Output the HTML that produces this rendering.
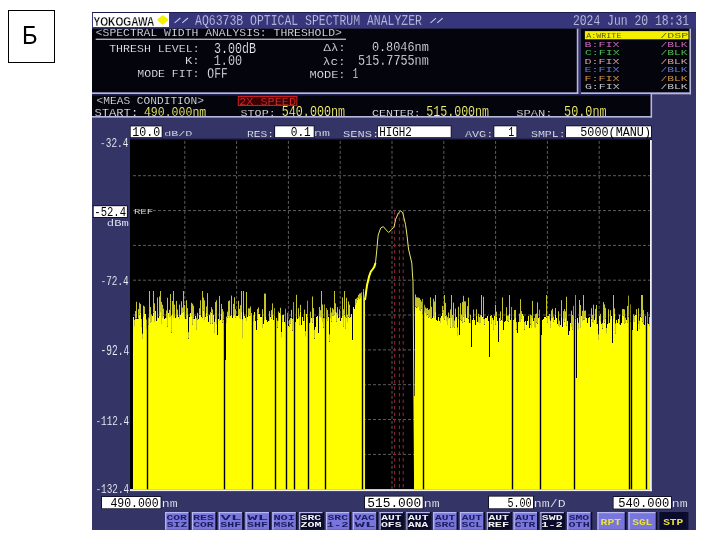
<!DOCTYPE html>
<html><head><meta charset="utf-8"><style>
html,body{margin:0;padding:0;background:#fff;width:702px;height:536px;overflow:hidden}
svg{display:block;will-change:transform;filter:blur(0.3px)}
</style></head><body>
<svg width="702" height="536" viewBox="0 0 702 536">
<rect x="0" y="0" width="702" height="536" fill="#ffffff" />
<rect x="8.5" y="10.5" width="46" height="52" fill="none" stroke="#000" stroke-width="1"/>
<text transform="translate(22.10,44.30) scale(0.2377,0.2623)" font-family="Liberation Sans" font-weight="normal" font-size="100" fill="#000"  xml:space="preserve">Б</text>
<rect x="92" y="12" width="604" height="518" fill="#353466" />
<rect x="92" y="12" width="604" height="16" fill="#37367c" />
<rect x="92" y="12" width="604" height="1" fill="#1c1c50" />
<rect x="93" y="13" width="76" height="14" fill="#ffffff" />
<text transform="translate(93.40,25.70) scale(0.1015,0.1348)" font-family="Liberation Sans" font-weight="bold" font-size="100" fill="#000"  stroke="#ffffff" stroke-width="2" xml:space="preserve">YOKOGAWA</text>
<path d="M158.6,19.9L162.8,16.4L167,19.9L162.8,23.4Z" fill="#f4f000" stroke="#f4f000" stroke-width="2.2" stroke-linejoin="round"/>
<path d="M174.6,22.8L180.4,18M182.2,22.8L188,18M430.5,22.8L436,18.1M437.2,22.8L442.7,18.1" stroke="#c8c8e8" stroke-width="1.1"/>
<text transform="translate(195.00,25.20) scale(0.1147,0.1373)" font-family="Liberation Mono" font-weight="normal" font-size="100" fill="#d8d8f4"  stroke="#37367c" stroke-width="2.2" xml:space="preserve">AQ6373B OPTICAL SPECTRUM ANALYZER</text>
<text transform="translate(572.90,24.80) scale(0.1139,0.1373)" font-family="Liberation Mono" font-weight="normal" font-size="100" fill="#e0e0f6"  stroke="#37367c" stroke-width="2.2" xml:space="preserve">2024 Jun 20 18:31</text>
<rect x="92" y="28.7" width="484.8" height="63.7" fill="#04040c" />
<rect x="92" y="92.4" width="486.3" height="1.9" fill="#b8b8de" />
<rect x="576.8" y="28.7" width="1.5" height="65.6" fill="#b8b8de" />
<rect x="581" y="28.7" width="108.5" height="63.7" fill="#04040c" />
<rect x="581" y="92.4" width="110" height="1.9" fill="#b8b8de" />
<rect x="689.5" y="28.7" width="1.5" height="65.6" fill="#b8b8de" />
<rect x="584.9" y="31.1" width="103.6" height="8.2" fill="#f4f000" />
<text transform="translate(586.20,38.30) scale(0.0839,0.0806)" font-family="Liberation Mono" font-weight="normal" font-size="100" fill="#3c3c10"  stroke="#f4f000" stroke-width="1.2" xml:space="preserve">A:WRITE</text>
<text transform="translate(660.30,38.30) scale(0.1162,0.0806)" font-family="Liberation Mono" font-weight="normal" font-size="100" fill="#3c3c10"  stroke="#f4f000" stroke-width="1.2" xml:space="preserve">/DSP</text>
<text transform="translate(584.56,46.70) scale(0.1169,0.0776)" font-family="Liberation Mono" font-weight="normal" font-size="100" fill="#e070c8"  stroke="#04040c" stroke-width="0.8" xml:space="preserve">B:FIX</text>
<text transform="translate(660.42,46.70) scale(0.1132,0.0776)" font-family="Liberation Mono" font-weight="normal" font-size="100" fill="#e070c8"  stroke="#04040c" stroke-width="0.8" xml:space="preserve">/BLK</text>
<text transform="translate(584.92,55.20) scale(0.1157,0.0776)" font-family="Liberation Mono" font-weight="normal" font-size="100" fill="#50d050"  stroke="#04040c" stroke-width="0.8" xml:space="preserve">C:FIX</text>
<text transform="translate(660.42,55.20) scale(0.1132,0.0776)" font-family="Liberation Mono" font-weight="normal" font-size="100" fill="#50d050"  stroke="#04040c" stroke-width="0.8" xml:space="preserve">/BLK</text>
<text transform="translate(584.56,63.70) scale(0.1169,0.0776)" font-family="Liberation Mono" font-weight="normal" font-size="100" fill="#e8b0a8"  stroke="#04040c" stroke-width="0.8" xml:space="preserve">D:FIX</text>
<text transform="translate(660.42,63.70) scale(0.1132,0.0776)" font-family="Liberation Mono" font-weight="normal" font-size="100" fill="#e8b0a8"  stroke="#04040c" stroke-width="0.8" xml:space="preserve">/BLK</text>
<text transform="translate(584.56,72.20) scale(0.1169,0.0776)" font-family="Liberation Mono" font-weight="normal" font-size="100" fill="#7080e0"  stroke="#04040c" stroke-width="0.8" xml:space="preserve">E:FIX</text>
<text transform="translate(660.42,72.20) scale(0.1132,0.0776)" font-family="Liberation Mono" font-weight="normal" font-size="100" fill="#7080e0"  stroke="#04040c" stroke-width="0.8" xml:space="preserve">/BLK</text>
<text transform="translate(584.44,80.70) scale(0.1173,0.0776)" font-family="Liberation Mono" font-weight="normal" font-size="100" fill="#e09c50"  stroke="#04040c" stroke-width="0.8" xml:space="preserve">F:FIX</text>
<text transform="translate(660.42,80.70) scale(0.1132,0.0776)" font-family="Liberation Mono" font-weight="normal" font-size="100" fill="#e09c50"  stroke="#04040c" stroke-width="0.8" xml:space="preserve">/BLK</text>
<text transform="translate(584.92,89.20) scale(0.1157,0.0776)" font-family="Liberation Mono" font-weight="normal" font-size="100" fill="#d8d8d8"  stroke="#04040c" stroke-width="0.8" xml:space="preserve">G:FIX</text>
<text transform="translate(660.42,89.20) scale(0.1132,0.0776)" font-family="Liberation Mono" font-weight="normal" font-size="100" fill="#d8d8d8"  stroke="#04040c" stroke-width="0.8" xml:space="preserve">/BLK</text>
<text transform="translate(95.72,36.40) scale(0.1141,0.1060)" font-family="Liberation Mono" font-weight="normal" font-size="100" fill="#f4f4fa"  stroke="#04040c" stroke-width="1.8" xml:space="preserve">&lt;SPECTRAL WIDTH ANALYSIS: THRESHOLD&gt;</text>
<rect x="95.7" y="38.6" width="250.3" height="1.4" fill="#b0b0b0" />
<text transform="translate(109.14,51.70) scale(0.1160,0.1060)" font-family="Liberation Mono" font-weight="normal" font-size="100" fill="#f4f4fa"  stroke="#04040c" stroke-width="1.8" xml:space="preserve">THRESH LEVEL:</text>
<text transform="translate(213.90,52.80) scale(0.1171,0.1389)" font-family="Liberation Mono" font-weight="normal" font-size="100" fill="#f4f4fa"  stroke="#04040c" stroke-width="1.8" xml:space="preserve">3.00dB</text>
<text transform="translate(185.02,64.00) scale(0.1227,0.1045)" font-family="Liberation Mono" font-weight="normal" font-size="100" fill="#f4f4fa"  stroke="#04040c" stroke-width="1.8" xml:space="preserve">K:</text>
<text transform="translate(213.77,64.90) scale(0.1181,0.1433)" font-family="Liberation Mono" font-weight="normal" font-size="100" fill="#f4f4fa"  stroke="#04040c" stroke-width="1.8" xml:space="preserve">1.00</text>
<text transform="translate(137.31,76.60) scale(0.1153,0.1060)" font-family="Liberation Mono" font-weight="normal" font-size="100" fill="#f4f4fa"  stroke="#04040c" stroke-width="1.8" xml:space="preserve">MODE FIT:</text>
<text transform="translate(207.33,77.70) scale(0.1137,0.1493)" font-family="Liberation Mono" font-weight="normal" font-size="100" fill="#f4f4fa"  stroke="#04040c" stroke-width="1.8" xml:space="preserve">OFF</text>
<text transform="translate(323.50,50.80) scale(0.1231,0.1090)" font-family="Liberation Mono" font-weight="normal" font-size="100" fill="#f4f4fa"  stroke="#04040c" stroke-width="1.8" xml:space="preserve">Δλ:</text>
<text transform="translate(371.89,51.40) scale(0.1186,0.1343)" font-family="Liberation Mono" font-weight="normal" font-size="100" fill="#f4f4fa"  stroke="#04040c" stroke-width="1.8" xml:space="preserve">0.8046nm</text>
<text transform="translate(322.73,64.80) scale(0.1280,0.1090)" font-family="Liberation Mono" font-weight="normal" font-size="100" fill="#f4f4fa"  stroke="#04040c" stroke-width="1.8" xml:space="preserve">λc:</text>
<text transform="translate(358.09,65.30) scale(0.1178,0.1448)" font-family="Liberation Mono" font-weight="normal" font-size="100" fill="#f4f4fa"  stroke="#04040c" stroke-width="1.8" xml:space="preserve">515.7755nm</text>
<text transform="translate(309.58,77.50) scale(0.1200,0.1075)" font-family="Liberation Mono" font-weight="normal" font-size="100" fill="#f4f4fa"  stroke="#04040c" stroke-width="1.8" xml:space="preserve">MODE:</text>
<text transform="translate(352.77,78.00) scale(0.0896,0.1418)" font-family="Liberation Mono" font-weight="normal" font-size="100" fill="#f4f4fa"  stroke="#04040c" stroke-width="1.8" xml:space="preserve">1</text>
<rect x="92" y="94" width="560" height="1.6" fill="#202050" />
<rect x="92" y="95.5" width="558.6" height="20.5" fill="#04040c" />
<rect x="650.6" y="94" width="1.5" height="23.6" fill="#b8b8de" />
<rect x="92" y="116" width="560" height="1.6" fill="#b8b8de" />
<text transform="translate(96.53,104.20) scale(0.1120,0.1030)" font-family="Liberation Mono" font-weight="normal" font-size="100" fill="#f4f4fa"  stroke="#04040c" stroke-width="1.8" xml:space="preserve">&lt;MEAS CONDITION&gt;</text>
<text transform="translate(94.51,115.80) scale(0.1214,0.1045)" font-family="Liberation Mono" font-weight="normal" font-size="100" fill="#f4f4fa"  stroke="#04040c" stroke-width="1.8" xml:space="preserve">START:</text>
<text transform="translate(143.92,115.80) scale(0.1155,0.1284)" font-family="Liberation Mono" font-weight="normal" font-size="100" fill="#f8f870"  stroke="#04040c" stroke-width="1" xml:space="preserve">490.000nm</text>
<rect x="238.3" y="96.4" width="58.6" height="9" fill="#3a0000" stroke="#d82020" stroke-width="1"/>
<text transform="translate(239.17,104.60) scale(0.1186,0.1045)" font-family="Liberation Mono" font-weight="normal" font-size="100" fill="#e83030"  stroke="#3a0000" stroke-width="1.8" xml:space="preserve">2X SPEED</text>
<text transform="translate(240.53,116.30) scale(0.1176,0.0940)" font-family="Liberation Mono" font-weight="normal" font-size="100" fill="#f4f4fa"  stroke="#04040c" stroke-width="1.8" xml:space="preserve">STOP:</text>
<text transform="translate(281.80,116.30) scale(0.1172,0.1403)" font-family="Liberation Mono" font-weight="normal" font-size="100" fill="#f8f870"  stroke="#04040c" stroke-width="1" xml:space="preserve">540.000nm</text>
<text transform="translate(372.02,116.30) scale(0.1161,0.0940)" font-family="Liberation Mono" font-weight="normal" font-size="100" fill="#f4f4fa"  stroke="#04040c" stroke-width="1.8" xml:space="preserve">CENTER:</text>
<text transform="translate(426.20,116.30) scale(0.1166,0.1388)" font-family="Liberation Mono" font-weight="normal" font-size="100" fill="#f8f870"  stroke="#04040c" stroke-width="1" xml:space="preserve">515.000nm</text>
<text transform="translate(516.32,116.30) scale(0.1210,0.0940)" font-family="Liberation Mono" font-weight="normal" font-size="100" fill="#f4f4fa"  stroke="#04040c" stroke-width="1.8" xml:space="preserve">SPAN:</text>
<text transform="translate(564.09,116.30) scale(0.1181,0.1388)" font-family="Liberation Mono" font-weight="normal" font-size="100" fill="#f8f870"  stroke="#04040c" stroke-width="1" xml:space="preserve">50.0nm</text>
<rect x="129.89999999999998" y="125.60000000000001" width="32.6" height="12.399999999999983" fill="#0c0c20" />
<rect x="130.7" y="126.4" width="31.0" height="10.799999999999983" fill="#ffffff" />
<text transform="translate(132.18,136.10) scale(0.1167,0.1269)" font-family="Liberation Mono" font-weight="normal" font-size="100" fill="#000"  xml:space="preserve">10.0</text>
<text transform="translate(164.18,136.20) scale(0.1175,0.0746)" font-family="Liberation Mono" font-weight="normal" font-size="100" fill="#f4f4fa"  stroke="#353466" stroke-width="1.8" xml:space="preserve">dB/D</text>
<text transform="translate(246.90,136.50) scale(0.1130,0.0866)" font-family="Liberation Mono" font-weight="normal" font-size="100" fill="#f4f4fa"  stroke="#353466" stroke-width="1.8" xml:space="preserve">RES:</text>
<rect x="274.3" y="125.5" width="40.19999999999997" height="12.499999999999991" fill="#0c0c20" />
<rect x="275.1" y="126.3" width="38.599999999999966" height="10.899999999999991" fill="#ffffff" />
<text transform="translate(290.73,136.10) scale(0.1112,0.1269)" font-family="Liberation Mono" font-weight="normal" font-size="100" fill="#000"  xml:space="preserve">0.1</text>
<text transform="translate(314.00,136.30) scale(0.1330,0.0907)" font-family="Liberation Mono" font-weight="normal" font-size="100" fill="#f4f4fa"  stroke="#353466" stroke-width="1.8" xml:space="preserve">nm</text>
<text transform="translate(342.91,136.50) scale(0.1213,0.0866)" font-family="Liberation Mono" font-weight="normal" font-size="100" fill="#f4f4fa"  stroke="#353466" stroke-width="1.8" xml:space="preserve">SENS:</text>
<rect x="377.09999999999997" y="125.5" width="74.4" height="12.499999999999991" fill="#0c0c20" />
<rect x="377.9" y="126.3" width="72.80000000000001" height="10.899999999999991" fill="#ffffff" />
<text transform="translate(379.13,136.10) scale(0.1088,0.1269)" font-family="Liberation Mono" font-weight="normal" font-size="100" fill="#000"  xml:space="preserve">HIGH2</text>
<text transform="translate(465.00,136.50) scale(0.1176,0.0866)" font-family="Liberation Mono" font-weight="normal" font-size="100" fill="#f4f4fa"  stroke="#353466" stroke-width="1.8" xml:space="preserve">AVG:</text>
<rect x="493.5" y="125.5" width="23.699999999999967" height="12.499999999999991" fill="#0c0c20" />
<rect x="494.3" y="126.3" width="22.099999999999966" height="10.899999999999991" fill="#ffffff" />
<text transform="translate(508.30,136.10) scale(0.1000,0.1269)" font-family="Liberation Mono" font-weight="normal" font-size="100" fill="#000"  xml:space="preserve">1</text>
<text transform="translate(530.94,136.50) scale(0.1162,0.0866)" font-family="Liberation Mono" font-weight="normal" font-size="100" fill="#f4f4fa"  stroke="#353466" stroke-width="1.8" xml:space="preserve">SMPL:</text>
<rect x="565.2" y="125.5" width="86.6" height="12.499999999999991" fill="#0c0c20" />
<rect x="566" y="126.3" width="85" height="10.899999999999991" fill="#ffffff" />
<text transform="translate(580.29,136.10) scale(0.1179,0.1269)" font-family="Liberation Mono" font-weight="normal" font-size="100" fill="#000"  xml:space="preserve">5000(MANU)</text>
<text transform="translate(100.09,147.10) scale(0.0943,0.1194)" font-family="Liberation Mono" font-weight="normal" font-size="100" fill="#f0f0f8"  stroke="#353466" stroke-width="0.8" xml:space="preserve">-32.4</text>
<rect x="92.9" y="205.39999999999998" width="34.800000000000004" height="12.400000000000011" fill="#0c0c20" />
<rect x="93.7" y="206.2" width="33.2" height="10.800000000000011" fill="#ffffff" />
<text transform="translate(94.31,215.80) scale(0.1057,0.1194)" font-family="Liberation Mono" font-weight="normal" font-size="100" fill="#000"  xml:space="preserve">-52.4</text>
<text transform="translate(106.85,225.80) scale(0.1220,0.0917)" font-family="Liberation Mono" font-weight="normal" font-size="100" fill="#f0f0f8"  stroke="#353466" stroke-width="0.8" xml:space="preserve">dBm</text>
<text transform="translate(100.50,284.50) scale(0.0939,0.1269)" font-family="Liberation Mono" font-weight="normal" font-size="100" fill="#f0f0f8"  stroke="#353466" stroke-width="0.8" xml:space="preserve">-72.4</text>
<text transform="translate(100.47,355.40) scale(0.0957,0.1418)" font-family="Liberation Mono" font-weight="normal" font-size="100" fill="#f0f0f8"  stroke="#353466" stroke-width="0.8" xml:space="preserve">-92.4</text>
<text transform="translate(95.50,425.20) scale(0.0935,0.1328)" font-family="Liberation Mono" font-weight="normal" font-size="100" fill="#f0f0f8"  stroke="#353466" stroke-width="0.8" xml:space="preserve">-112.4</text>
<text transform="translate(95.50,492.50) scale(0.0935,0.1269)" font-family="Liberation Mono" font-weight="normal" font-size="100" fill="#f0f0f8"  stroke="#353466" stroke-width="0.8" xml:space="preserve">-132.4</text>
<rect x="101.2" y="496.2" width="60.199999999999996" height="12.900000000000011" fill="#0c0c20" />
<rect x="102" y="497" width="58.599999999999994" height="11.300000000000011" fill="#ffffff" />
<text transform="translate(110.43,507.00) scale(0.1149,0.1254)" font-family="Liberation Mono" font-weight="normal" font-size="100" fill="#000"  xml:space="preserve">490.000</text>
<text transform="translate(161.81,507.00) scale(0.1321,0.1111)" font-family="Liberation Mono" font-weight="normal" font-size="100" fill="#f4f4fa"  stroke="#353466" stroke-width="1.8" xml:space="preserve">nm</text>
<rect x="364.2" y="495.8" width="59.29999999999999" height="13.299999999999988" fill="#0c0c20" />
<rect x="365" y="496.6" width="57.69999999999999" height="11.699999999999989" fill="#ffffff" />
<text transform="translate(367.23,507.00) scale(0.1287,0.1284)" font-family="Liberation Mono" font-weight="normal" font-size="100" fill="#000"  xml:space="preserve">515.000</text>
<text transform="translate(423.81,507.00) scale(0.1321,0.1111)" font-family="Liberation Mono" font-weight="normal" font-size="100" fill="#f4f4fa"  stroke="#353466" stroke-width="1.8" xml:space="preserve">nm</text>
<rect x="488.2" y="495.8" width="45.6" height="13.299999999999988" fill="#0c0c20" />
<rect x="489" y="496.6" width="44" height="11.699999999999989" fill="#ffffff" />
<text transform="translate(507.39,507.00) scale(0.1009,0.1284)" font-family="Liberation Mono" font-weight="normal" font-size="100" fill="#000"  xml:space="preserve">5.00</text>
<text transform="translate(533.81,507.00) scale(0.1327,0.1111)" font-family="Liberation Mono" font-weight="normal" font-size="100" fill="#f4f4fa"  stroke="#353466" stroke-width="1.8" xml:space="preserve">nm/D</text>
<rect x="612.8000000000001" y="496.2" width="58.99999999999998" height="13.200000000000022" fill="#0c0c20" />
<rect x="613.6" y="497" width="57.39999999999998" height="11.600000000000023" fill="#ffffff" />
<text transform="translate(618.27,507.00) scale(0.1213,0.1254)" font-family="Liberation Mono" font-weight="normal" font-size="100" fill="#000"  xml:space="preserve">540.000</text>
<text transform="translate(671.81,507.00) scale(0.1321,0.1111)" font-family="Liberation Mono" font-weight="normal" font-size="100" fill="#f4f4fa"  stroke="#353466" stroke-width="1.8" xml:space="preserve">nm</text>
<rect x="165.1" y="512" width="23.6" height="17.8" fill="#7876dc" />
<rect x="165.1" y="512" width="23.6" height="1.2" fill="#b8b8f0" />
<rect x="165.1" y="512" width="1.2" height="17.8" fill="#b8b8f0" />
<rect x="188.7" y="512" width="1.6" height="17.8" fill="#0c0c24" />
<text transform="translate(166.45,520.20) scale(0.1136,0.0716)" font-family="Liberation Mono" font-weight="bold" font-size="100" fill="#1c1c60"  xml:space="preserve">COR</text>
<text transform="translate(166.67,527.40) scale(0.1149,0.0776)" font-family="Liberation Mono" font-weight="bold" font-size="100" fill="#1c1c60"  xml:space="preserve">SIZ</text>
<rect x="191.9" y="512" width="23.6" height="17.8" fill="#7876dc" />
<rect x="191.9" y="512" width="23.6" height="1.2" fill="#b8b8f0" />
<rect x="191.9" y="512" width="1.2" height="17.8" fill="#b8b8f0" />
<rect x="215.5" y="512" width="1.6" height="17.8" fill="#0c0c24" />
<text transform="translate(192.88,520.20) scale(0.1176,0.0716)" font-family="Liberation Mono" font-weight="bold" font-size="100" fill="#1c1c60"  xml:space="preserve">RES</text>
<text transform="translate(193.25,527.40) scale(0.1136,0.0776)" font-family="Liberation Mono" font-weight="bold" font-size="100" fill="#1c1c60"  xml:space="preserve">COR</text>
<rect x="218.7" y="512" width="23.6" height="17.8" fill="#7876dc" />
<rect x="218.7" y="512" width="23.6" height="1.2" fill="#b8b8f0" />
<rect x="218.7" y="512" width="1.2" height="17.8" fill="#b8b8f0" />
<rect x="242.29999999999998" y="512" width="1.6" height="17.8" fill="#0c0c24" />
<text transform="translate(220.50,520.20) scale(0.1739,0.0716)" font-family="Liberation Mono" font-weight="bold" font-size="100" fill="#1c1c60"  xml:space="preserve">VL</text>
<text transform="translate(220.27,527.40) scale(0.1163,0.0776)" font-family="Liberation Mono" font-weight="bold" font-size="100" fill="#1c1c60"  xml:space="preserve">SHF</text>
<rect x="245.5" y="512" width="23.6" height="17.8" fill="#7876dc" />
<rect x="245.5" y="512" width="23.6" height="1.2" fill="#b8b8f0" />
<rect x="245.5" y="512" width="1.2" height="17.8" fill="#b8b8f0" />
<rect x="269.1" y="512" width="1.6" height="17.8" fill="#0c0c24" />
<text transform="translate(247.30,520.20) scale(0.1739,0.0716)" font-family="Liberation Mono" font-weight="bold" font-size="100" fill="#1c1c60"  xml:space="preserve">WL</text>
<text transform="translate(247.07,527.40) scale(0.1163,0.0776)" font-family="Liberation Mono" font-weight="bold" font-size="100" fill="#1c1c60"  xml:space="preserve">SHF</text>
<rect x="272.3" y="512" width="23.6" height="17.8" fill="#7876dc" />
<rect x="272.3" y="512" width="23.6" height="1.2" fill="#b8b8f0" />
<rect x="272.3" y="512" width="1.2" height="17.8" fill="#b8b8f0" />
<rect x="295.90000000000003" y="512" width="1.6" height="17.8" fill="#0c0c24" />
<text transform="translate(273.38,520.20) scale(0.1205,0.0716)" font-family="Liberation Mono" font-weight="bold" font-size="100" fill="#1c1c60"  xml:space="preserve">NOI</text>
<text transform="translate(273.53,527.40) scale(0.1143,0.0776)" font-family="Liberation Mono" font-weight="bold" font-size="100" fill="#1c1c60"  xml:space="preserve">MSK</text>
<rect x="299.1" y="512" width="23.6" height="17.8" fill="#0a0a2c" />
<rect x="299.1" y="512" width="23.6" height="1.2" fill="#b8b8f0" />
<rect x="299.1" y="512" width="1.2" height="17.8" fill="#b8b8f0" />
<rect x="322.70000000000005" y="512" width="1.6" height="17.8" fill="#0c0c24" />
<text transform="translate(300.67,520.20) scale(0.1143,0.0716)" font-family="Liberation Mono" font-weight="bold" font-size="100" fill="#f4f4f4"  xml:space="preserve">SRC</text>
<text transform="translate(300.43,527.40) scale(0.1170,0.0776)" font-family="Liberation Mono" font-weight="bold" font-size="100" fill="#f4f4f4"  xml:space="preserve">ZOM</text>
<rect x="325.9" y="512" width="23.6" height="17.8" fill="#7876dc" />
<rect x="325.9" y="512" width="23.6" height="1.2" fill="#b8b8f0" />
<rect x="325.9" y="512" width="1.2" height="17.8" fill="#b8b8f0" />
<rect x="349.5" y="512" width="1.6" height="17.8" fill="#0c0c24" />
<text transform="translate(327.47,520.20) scale(0.1143,0.0716)" font-family="Liberation Mono" font-weight="bold" font-size="100" fill="#1c1c60"  xml:space="preserve">SRC</text>
<text transform="translate(326.86,527.40) scale(0.1198,0.0776)" font-family="Liberation Mono" font-weight="bold" font-size="100" fill="#1c1c60"  xml:space="preserve">1-2</text>
<rect x="352.7" y="512" width="23.6" height="17.8" fill="#7876dc" />
<rect x="352.7" y="512" width="23.6" height="1.2" fill="#b8b8f0" />
<rect x="352.7" y="512" width="1.2" height="17.8" fill="#b8b8f0" />
<rect x="376.3" y="512" width="1.6" height="17.8" fill="#0c0c24" />
<text transform="translate(354.50,520.20) scale(0.1130,0.0716)" font-family="Liberation Mono" font-weight="bold" font-size="100" fill="#1c1c60"  xml:space="preserve">VAC</text>
<text transform="translate(354.50,527.40) scale(0.1739,0.0776)" font-family="Liberation Mono" font-weight="bold" font-size="100" fill="#1c1c60"  xml:space="preserve">WL</text>
<rect x="379.5" y="512" width="23.6" height="17.8" fill="#0a0a2c" />
<rect x="379.5" y="512" width="23.6" height="1.2" fill="#b8b8f0" />
<rect x="379.5" y="512" width="1.2" height="17.8" fill="#b8b8f0" />
<rect x="403.1" y="512" width="1.6" height="17.8" fill="#0c0c24" />
<text transform="translate(381.30,520.20) scale(0.1130,0.0716)" font-family="Liberation Mono" font-weight="bold" font-size="100" fill="#f4f4f4"  xml:space="preserve">AUT</text>
<text transform="translate(380.96,527.40) scale(0.1149,0.0776)" font-family="Liberation Mono" font-weight="bold" font-size="100" fill="#f4f4f4"  xml:space="preserve">OFS</text>
<rect x="406.3" y="512" width="23.6" height="17.8" fill="#0a0a2c" />
<rect x="406.3" y="512" width="23.6" height="1.2" fill="#b8b8f0" />
<rect x="406.3" y="512" width="1.2" height="17.8" fill="#b8b8f0" />
<rect x="429.90000000000003" y="512" width="1.6" height="17.8" fill="#0c0c24" />
<text transform="translate(408.10,520.20) scale(0.1130,0.0716)" font-family="Liberation Mono" font-weight="bold" font-size="100" fill="#f4f4f4"  xml:space="preserve">AUT</text>
<text transform="translate(408.10,527.40) scale(0.1111,0.0776)" font-family="Liberation Mono" font-weight="bold" font-size="100" fill="#f4f4f4"  xml:space="preserve">ANA</text>
<rect x="433.1" y="512" width="23.6" height="17.8" fill="#7876dc" />
<rect x="433.1" y="512" width="23.6" height="1.2" fill="#b8b8f0" />
<rect x="433.1" y="512" width="1.2" height="17.8" fill="#b8b8f0" />
<rect x="456.70000000000005" y="512" width="1.6" height="17.8" fill="#0c0c24" />
<text transform="translate(434.90,520.20) scale(0.1130,0.0716)" font-family="Liberation Mono" font-weight="bold" font-size="100" fill="#1c1c60"  xml:space="preserve">AUT</text>
<text transform="translate(434.67,527.40) scale(0.1143,0.0776)" font-family="Liberation Mono" font-weight="bold" font-size="100" fill="#1c1c60"  xml:space="preserve">SRC</text>
<rect x="459.9" y="512" width="23.6" height="17.8" fill="#7876dc" />
<rect x="459.9" y="512" width="23.6" height="1.2" fill="#b8b8f0" />
<rect x="459.9" y="512" width="1.2" height="17.8" fill="#b8b8f0" />
<rect x="483.5" y="512" width="1.6" height="17.8" fill="#0c0c24" />
<text transform="translate(461.70,520.20) scale(0.1130,0.0716)" font-family="Liberation Mono" font-weight="bold" font-size="100" fill="#1c1c60"  xml:space="preserve">AUT</text>
<text transform="translate(461.47,527.40) scale(0.1156,0.0776)" font-family="Liberation Mono" font-weight="bold" font-size="100" fill="#1c1c60"  xml:space="preserve">SCL</text>
<rect x="486.70000000000005" y="512" width="23.6" height="17.8" fill="#0a0a2c" />
<rect x="486.70000000000005" y="512" width="23.6" height="1.2" fill="#b8b8f0" />
<rect x="486.70000000000005" y="512" width="1.2" height="17.8" fill="#b8b8f0" />
<rect x="510.30000000000007" y="512" width="1.6" height="17.8" fill="#0c0c24" />
<text transform="translate(488.50,520.20) scale(0.1130,0.0716)" font-family="Liberation Mono" font-weight="bold" font-size="100" fill="#f4f4f4"  xml:space="preserve">AUT</text>
<text transform="translate(487.66,527.40) scale(0.1198,0.0776)" font-family="Liberation Mono" font-weight="bold" font-size="100" fill="#f4f4f4"  xml:space="preserve">REF</text>
<rect x="513.5" y="512" width="23.6" height="17.8" fill="#7876dc" />
<rect x="513.5" y="512" width="23.6" height="1.2" fill="#b8b8f0" />
<rect x="513.5" y="512" width="1.2" height="17.8" fill="#b8b8f0" />
<rect x="537.1" y="512" width="1.6" height="17.8" fill="#0c0c24" />
<text transform="translate(515.30,520.20) scale(0.1130,0.0716)" font-family="Liberation Mono" font-weight="bold" font-size="100" fill="#1c1c60"  xml:space="preserve">AUT</text>
<text transform="translate(514.85,527.40) scale(0.1136,0.0776)" font-family="Liberation Mono" font-weight="bold" font-size="100" fill="#1c1c60"  xml:space="preserve">CTR</text>
<rect x="540.3" y="512" width="23.6" height="17.8" fill="#0a0a2c" />
<rect x="540.3" y="512" width="23.6" height="1.2" fill="#b8b8f0" />
<rect x="540.3" y="512" width="1.2" height="17.8" fill="#b8b8f0" />
<rect x="563.9" y="512" width="1.6" height="17.8" fill="#0c0c24" />
<text transform="translate(541.87,520.20) scale(0.1149,0.0716)" font-family="Liberation Mono" font-weight="bold" font-size="100" fill="#f4f4f4"  xml:space="preserve">SWD</text>
<text transform="translate(541.26,527.40) scale(0.1198,0.0776)" font-family="Liberation Mono" font-weight="bold" font-size="100" fill="#f4f4f4"  xml:space="preserve">1-2</text>
<rect x="567.1" y="512" width="23.6" height="17.8" fill="#7876dc" />
<rect x="567.1" y="512" width="23.6" height="1.2" fill="#b8b8f0" />
<rect x="567.1" y="512" width="1.2" height="17.8" fill="#b8b8f0" />
<rect x="590.7" y="512" width="1.6" height="17.8" fill="#0c0c24" />
<text transform="translate(568.67,520.20) scale(0.1143,0.0716)" font-family="Liberation Mono" font-weight="bold" font-size="100" fill="#1c1c60"  xml:space="preserve">SMO</text>
<text transform="translate(568.55,527.40) scale(0.1176,0.0776)" font-family="Liberation Mono" font-weight="bold" font-size="100" fill="#1c1c60"  xml:space="preserve">OTH</text>
<rect x="597.4" y="512" width="27.4" height="17.8" fill="#7876dc" />
<rect x="597.4" y="512" width="27.4" height="1.2" fill="#b8b8f0" />
<rect x="597.4" y="512" width="1.2" height="17.8" fill="#b8b8f0" />
<rect x="624.8" y="512" width="1.6" height="17.8" fill="#0c0c24" />
<text transform="translate(600.60,524.50) scale(0.1141,0.0896)" font-family="Liberation Mono" font-weight="bold" font-size="100" fill="#e8e040"  xml:space="preserve">RPT</text>
<rect x="628.4" y="512" width="27.4" height="17.8" fill="#7876dc" />
<rect x="628.4" y="512" width="27.4" height="1.2" fill="#b8b8f0" />
<rect x="628.4" y="512" width="1.2" height="17.8" fill="#b8b8f0" />
<rect x="655.8" y="512" width="1.6" height="17.8" fill="#0c0c24" />
<text transform="translate(632.18,524.50) scale(0.1121,0.0896)" font-family="Liberation Mono" font-weight="bold" font-size="100" fill="#e8e040"  xml:space="preserve">SGL</text>
<rect x="659.4" y="512" width="27.4" height="17.8" fill="#0a0a2c" />
<rect x="686.8" y="512" width="1.6" height="17.8" fill="#0c0c24" />
<text transform="translate(663.18,524.50) scale(0.1115,0.0896)" font-family="Liberation Mono" font-weight="bold" font-size="100" fill="#e8e040"  xml:space="preserve">STP</text>
<rect x="130" y="140" width="520" height="349.2" fill="#000000" />
<rect x="650" y="140" width="1.8" height="351.2" fill="#f0f0f0" />
<rect x="130" y="489.2" width="521.8" height="1.9" fill="#f0f0f0" />
<rect x="130" y="138.6" width="522" height="1.4" fill="#10103a" />
<path d="M184.8,140.9V489.2M236.6,140.9V489.2M288.4,140.9V489.2M340.2,140.9V489.2M392.0,140.9V489.2M443.8,140.9V489.2M495.6,140.9V489.2M547.4,140.9V489.2M599.2,140.9V489.2M133,175.7H650M133,210.6H650M133,245.4H650M133,280.2H650M133,315.0H650M133,349.9H650M133,384.7H650M133,419.5H650M133,454.4H650" stroke="#5c5c5c" stroke-width="1" stroke-dasharray="3,2" fill="none"/>
<path d="M133,489.2L133,316.6L134,316.6L134,326.3L135,326.3L135,318.7L136,318.7L136,318.5L137,318.5L137,319.0L138,319.0L138,318.6L139,318.6L139,314.5L140,314.5L140,312.9L141,312.9L141,326.9L142,326.9L142,339.1L143,339.1L143,317.2L144,317.2L144,314.0L145,314.0L145,314.3L146,314.3L146,329.0L147,329.0L147,322.9L148,322.9L148,324.8L149,324.8L149,318.3L150,318.3L150,322.9L151,322.9L151,321.9L152,321.9L152,316.2L153,316.2L153,312.7L154,312.7L154,322.2L155,322.2L155,311.2L156,311.2L156,321.2L157,321.2L157,317.4L158,317.4L158,317.7L159,317.7L159,315.8L160,315.8L160,312.2L161,312.2L161,324.2L162,324.2L162,318.1L163,318.1L163,315.5L164,315.5L164,319.3L165,319.3L165,318.1L166,318.1L166,318.2L167,318.2L167,326.7L168,326.7L168,313.1L169,313.1L169,317.3L170,317.3L170,317.2L171,317.2L171,332.6L172,332.6L172,314.0L173,314.0L173,318.1L174,318.1L174,316.0L175,316.0L175,318.4L176,318.4L176,317.4L177,317.4L177,315.0L178,315.0L178,316.5L179,316.5L179,319.2L180,319.2L180,314.8L181,314.8L181,313.3L182,313.3L182,313.0L183,313.0L183,311.9L184,311.9L184,317.4L185,317.4L185,319.3L186,319.3L186,318.9L187,318.9L187,315.0L188,315.0L188,338.5L189,338.5L189,316.8L190,316.8L190,313.4L191,313.4L191,316.4L192,316.4L192,324.8L193,324.8L193,318.6L194,318.6L194,318.6L195,318.6L195,315.9L196,315.9L196,329.9L197,329.9L197,319.6L198,319.6L198,318.9L199,318.9L199,314.6L200,314.6L200,314.8L201,314.8L201,316.5L202,316.5L202,317.5L203,317.5L203,310.8L204,310.8L204,320.3L205,320.3L205,316.9L206,316.9L206,313.3L207,313.3L207,315.7L208,315.7L208,321.7L209,321.7L209,315.0L210,315.0L210,323.7L211,323.7L211,312.7L212,312.7L212,323.7L213,323.7L213,314.6L214,314.6L214,333.4L215,333.4L215,319.0L216,319.0L216,324.4L217,324.4L217,334.8L218,334.8L218,319.3L219,319.3L219,321.2L220,321.2L220,320.3L221,320.3L221,314.1L222,314.1L222,322.6L223,322.6L223,319.6L224,319.6L224,315.8L225,315.8L225,320.8L226,320.8L226,323.1L227,323.1L227,317.8L228,317.8L228,316.1L229,316.1L229,318.0L230,318.0L230,316.2L231,316.2L231,314.8L232,314.8L232,318.3L233,318.3L233,316.2L234,316.2L234,315.0L235,315.0L235,317.8L236,317.8L236,315.9L237,315.9L237,315.8L238,315.8L238,314.9L239,314.9L239,318.3L240,318.3L240,319.3L241,319.3L241,312.3L242,312.3L242,338.4L243,338.4L243,312.1L244,312.1L244,316.0L245,316.0L245,318.0L246,318.0L246,321.0L247,321.0L247,316.9L248,316.9L248,315.1L249,315.1L249,315.6L250,315.6L250,315.9L251,315.9L251,313.3L252,313.3L252,316.9L253,316.9L253,321.4L254,321.4L254,311.9L255,311.9L255,320.7L256,320.7L256,316.8L257,316.8L257,319.5L258,319.5L258,313.6L259,313.6L259,314.3L260,314.3L260,317.0L261,317.0L261,316.8L262,316.8L262,328.0L263,328.0L263,324.3L264,324.3L264,320.2L265,320.2L265,317.1L266,317.1L266,320.4L267,320.4L267,322.3L268,322.3L268,320.9L269,320.9L269,321.2L270,321.2L270,316.6L271,316.6L271,318.6L272,318.6L272,315.3L273,315.3L273,319.7L274,319.7L274,316.3L275,316.3L275,321.0L276,321.0L276,318.1L277,318.1L277,327.5L278,327.5L278,321.1L279,321.1L279,313.2L280,313.2L280,315.2L281,315.2L281,337.4L282,337.4L282,321.8L283,321.8L283,315.1L284,315.1L284,322.0L285,322.0L285,324.1L286,324.1L286,323.6L287,323.6L287,319.2L288,319.2L288,325.7L289,325.7L289,326.7L290,326.7L290,323.8L291,323.8L291,317.5L292,317.5L292,330.6L293,330.6L293,318.4L294,318.4L294,322.9L295,322.9L295,321.6L296,321.6L296,317.4L297,317.4L297,318.7L298,318.7L298,317.7L299,317.7L299,324.8L300,324.8L300,311.8L301,311.8L301,325.3L302,325.3L302,317.3L303,317.3L303,321.1L304,321.1L304,321.4L305,321.4L305,336.4L306,336.4L306,314.4L307,314.4L307,316.7L308,316.7L308,317.2L309,317.2L309,323.1L310,323.1L310,322.2L311,322.2L311,318.0L312,318.0L312,322.7L313,322.7L313,317.8L314,317.8L314,338.5L315,338.5L315,327.1L316,327.1L316,316.5L317,316.5L317,315.7L318,315.7L318,332.7L319,332.7L319,316.3L320,316.3L320,317.1L321,317.1L321,318.2L322,318.2L322,322.3L323,322.3L323,327.6L324,327.6L324,317.5L325,317.5L325,322.2L326,322.2L326,319.2L327,319.2L327,320.9L328,320.9L328,317.2L329,317.2L329,341.5L330,341.5L330,318.1L331,318.1L331,321.6L332,321.6L332,315.8L333,315.8L333,315.8L334,315.8L334,314.8L335,314.8L335,312.0L336,312.0L336,321.7L337,321.7L337,315.0L338,315.0L338,317.9L339,317.9L339,316.8L340,316.8L340,320.9L341,320.9L341,317.9L342,317.9L342,315.9L343,315.9L343,326.8L344,326.8L344,314.6L345,314.6L345,328.9L346,328.9L346,317.6L347,317.6L347,322.4L348,322.4L348,316.5L349,316.5L349,317.5L350,317.5L350,316.9L351,316.9L351,314.3L352,314.3L352,325.5L353,325.5L353,306.8L354,306.8L354,308.6L355,308.6L355,304.9L356,304.9L356,302.9L357,302.9L357,299.5L358,299.5L358,297.8L359,297.8L359,298.8L360,298.8L360,298.0L361,298.0L361,296.1L362,296.1L362,292.8L363,292.8L363,292.0L364,292.0L364,489.2L365,489.2L366,489.2L367,489.2L368,489.2L369,489.2L370,489.2L371,489.2L372,489.2L373,489.2L374,489.2L375,489.2L376,489.2L377,489.2L378,489.2L379,489.2L380,489.2L381,489.2L382,489.2L383,489.2L384,489.2L385,489.2L386,489.2L387,489.2L388,489.2L389,489.2L390,489.2L391,489.2L392,489.2L393,489.2L394,489.2L395,489.2L396,489.2L397,489.2L398,489.2L399,489.2L400,489.2L401,489.2L402,489.2L403,489.2L404,489.2L405,489.2L406,489.2L407,489.2L408,489.2L409,489.2L410,489.2L411,489.2L412,489.2L413,489.2L414,489.2L415,306.6L416,306.6L416,307.5L417,307.5L417,308.0L418,308.0L418,307.0L419,307.0L419,309.9L420,309.9L420,310.7L421,310.7L421,308.7L422,308.7L422,313.6L423,313.6L423,313.6L424,313.6L424,311.3L425,311.3L425,313.2L426,313.2L426,316.3L427,316.3L427,314.5L428,314.5L428,317.6L429,317.6L429,316.8L430,316.8L430,318.4L431,318.4L431,318.6L432,318.6L432,317.6L433,317.6L433,316.0L434,316.0L434,318.2L435,318.2L435,312.1L436,312.1L436,319.5L437,319.5L437,320.6L438,320.6L438,317.4L439,317.4L439,320.5L440,320.5L440,323.0L441,323.0L441,316.2L442,316.2L442,312.7L443,312.7L443,317.8L444,317.8L444,319.6L445,319.6L445,315.5L446,315.5L446,321.0L447,321.0L447,325.0L448,325.0L448,319.4L449,319.4L449,318.3L450,318.3L450,327.7L451,327.7L451,318.1L452,318.1L452,328.2L453,328.2L453,327.1L454,327.1L454,327.7L455,327.7L455,318.3L456,318.3L456,317.1L457,317.1L457,336.0L458,336.0L458,318.9L459,318.9L459,334.8L460,334.8L460,319.7L461,319.7L461,320.6L462,320.6L462,322.7L463,322.7L463,316.8L464,316.8L464,321.5L465,321.5L465,314.2L466,314.2L466,318.2L467,318.2L467,317.9L468,317.9L468,318.5L469,318.5L469,323.1L470,323.1L470,323.3L471,323.3L471,323.4L472,323.4L472,320.3L473,320.3L473,317.6L474,317.6L474,319.5L475,319.5L475,324.9L476,324.9L476,315.8L477,315.8L477,321.5L478,321.5L478,322.4L479,322.4L479,323.3L480,323.3L480,323.2L481,323.2L481,314.7L482,314.7L482,317.1L483,317.1L483,318.6L484,318.6L484,324.5L485,324.5L485,318.1L486,318.1L486,318.1L487,318.1L487,315.9L488,315.9L488,320.9L489,320.9L489,333.2L490,333.2L490,316.0L491,316.0L491,323.9L492,323.9L492,318.2L493,318.2L493,329.8L494,329.8L494,316.4L495,316.4L495,324.7L496,324.7L496,316.8L497,316.8L497,321.4L498,321.4L498,342.0L499,342.0L499,317.9L500,317.9L500,320.6L501,320.6L501,320.2L502,320.2L502,320.9L503,320.9L503,329.9L504,329.9L504,322.2L505,322.2L505,321.0L506,321.0L506,316.1L507,316.1L507,320.6L508,320.6L508,321.5L509,321.5L509,314.0L510,314.0L510,320.2L511,320.2L511,318.1L512,318.1L512,320.8L513,320.8L513,319.6L514,319.6L514,319.4L515,319.4L515,318.1L516,318.1L516,329.5L517,329.5L517,333.0L518,333.0L518,322.0L519,322.0L519,322.1L520,322.1L520,321.9L521,321.9L521,318.9L522,318.9L522,314.3L523,314.3L523,316.3L524,316.3L524,329.6L525,329.6L525,320.5L526,320.5L526,325.0L527,325.0L527,320.7L528,320.7L528,315.9L529,315.9L529,328.2L530,328.2L530,324.5L531,324.5L531,328.2L532,328.2L532,318.1L533,318.1L533,320.8L534,320.8L534,327.2L535,327.2L535,328.2L536,328.2L536,322.7L537,322.7L537,323.5L538,323.5L538,318.3L539,318.3L539,316.6L540,316.6L540,320.7L541,320.7L541,334.9L542,334.9L542,320.1L543,320.1L543,319.2L544,319.2L544,316.5L545,316.5L545,317.4L546,317.4L546,317.6L547,317.6L547,322.6L548,322.6L548,315.7L549,315.7L549,319.3L550,319.3L550,328.0L551,328.0L551,318.1L552,318.1L552,317.9L553,317.9L553,321.6L554,321.6L554,320.1L555,320.1L555,314.8L556,314.8L556,317.9L557,317.9L557,323.5L558,323.5L558,326.0L559,326.0L559,327.2L560,327.2L560,324.5L561,324.5L561,317.3L562,317.3L562,326.6L563,326.6L563,319.2L564,319.2L564,321.6L565,321.6L565,318.3L566,318.3L566,325.7L567,325.7L567,321.1L568,321.1L568,335.4L569,335.4L569,330.7L570,330.7L570,322.5L571,322.5L571,327.1L572,327.1L572,329.7L573,329.7L573,316.4L574,316.4L574,322.9L575,322.9L575,318.6L576,318.6L576,321.7L577,321.7L577,317.9L578,317.9L578,329.3L579,329.3L579,317.2L580,317.2L580,328.0L581,328.0L581,315.6L582,315.6L582,321.3L583,321.3L583,319.7L584,319.7L584,319.8L585,319.8L585,317.4L586,317.4L586,318.1L587,318.1L587,322.5L588,322.5L588,318.2L589,318.2L589,316.7L590,316.7L590,326.8L591,326.8L591,318.6L592,318.6L592,321.8L593,321.8L593,323.3L594,323.3L594,320.3L595,320.3L595,318.2L596,318.2L596,323.7L597,323.7L597,324.0L598,324.0L598,340.0L599,340.0L599,315.6L600,315.6L600,321.3L601,321.3L601,323.6L602,323.6L602,328.5L603,328.5L603,320.2L604,320.2L604,322.6L605,322.6L605,318.7L606,318.7L606,333.4L607,333.4L607,323.5L608,323.5L608,323.3L609,323.3L609,322.6L610,322.6L610,319.3L611,319.3L611,315.9L612,315.9L612,342.8L613,342.8L613,319.2L614,319.2L614,314.2L615,314.2L615,333.8L616,333.8L616,320.0L617,320.0L617,322.7L618,322.7L618,318.9L619,318.9L619,323.6L620,323.6L620,324.6L621,324.6L621,323.3L622,323.3L622,315.4L623,315.4L623,315.7L624,315.7L624,323.9L625,323.9L625,322.8L626,322.8L626,319.7L627,319.7L627,322.8L628,322.8L628,316.6L629,316.6L629,327.8L630,327.8L630,321.7L631,321.7L631,322.9L632,322.9L632,330.4L633,330.4L633,321.3L634,321.3L634,321.8L635,321.8L635,314.6L636,314.6L636,314.8L637,314.8L637,330.5L638,330.5L638,323.9L639,323.9L639,328.9L640,328.9L640,317.1L641,317.1L641,317.7L642,317.7L642,321.6L643,321.6L643,323.6L644,323.6L644,324.8L645,324.8L645,316.1L646,316.1L646,319.8L647,319.8L647,322.7L648,322.7L648,323.6L649,323.6L649,326.4L650,326.4L650,489.2Z" fill="#ffff00" shape-rendering="crispEdges"/>
<path d="M134.5,326.3V319.8M135.5,318.7V311.0M136.5,318.5V301.8M138.5,318.6V309.1M139.5,314.5V302.6M140.5,312.9V304.0M141.5,326.9V319.0M142.5,339.1V333.7M143.5,317.2V305.6M144.5,314.0V306.5M146.5,329.0V319.5M147.5,322.9V310.9M148.5,324.8V317.4M149.5,318.3V291.0M150.5,322.9V307.0M151.5,321.9V314.4M153.5,312.7V291.0M154.5,322.2V303.3M157.5,317.4V297.5M159.5,315.8V296.5M160.5,312.2V291.0M161.5,324.2V301.9M162.5,318.1V304.7M163.5,315.5V308.7M166.5,318.2V310.4M167.5,326.7V297.7M169.5,317.3V309.9M170.5,317.2V294.1M171.5,332.6V315.5M172.5,314.0V301.0M173.5,318.1V291.0M174.5,316.0V304.6M176.5,317.4V301.0M177.5,315.0V309.5M179.5,319.2V304.6M181.5,313.3V301.3M182.5,313.0V307.6M183.5,311.9V291.0M184.5,317.4V304.9M186.5,318.9V300.3M187.5,315.0V308.1M188.5,338.5V332.2M191.5,316.4V302.8M192.5,324.8V303.7M193.5,318.6V305.7M196.5,329.9V318.3M197.5,319.6V312.8M199.5,314.6V308.2M200.5,314.8V300.2M202.5,317.5V291.0M203.5,310.8V297.6M204.5,320.3V300.4M206.5,313.3V306.5M207.5,315.7V293.2M210.5,323.7V312.1M211.5,312.7V307.1M212.5,323.7V309.4M214.5,333.4V321.9M215.5,319.0V302.0M216.5,324.4V300.3M219.5,321.2V295.9M221.5,314.1V303.9M222.5,322.6V309.0M223.5,319.6V311.4M224.5,315.8V291.0M225.5,320.8V308.6M226.5,323.1V316.6M227.5,317.8V311.6M228.5,316.1V301.1M229.5,318.0V300.4M231.5,314.8V295.6M233.5,316.2V303.8M234.5,315.0V297.3M235.5,317.8V309.2M238.5,314.9V300.9M239.5,318.3V308.9M240.5,319.3V305.2M241.5,312.3V291.0M242.5,338.4V319.2M243.5,312.1V291.0M246.5,321.0V292.0M248.5,315.1V308.3M249.5,315.6V308.4M250.5,315.9V306.5M252.5,316.9V310.7M253.5,321.4V315.1M257.5,319.5V309.0M258.5,313.6V307.4M262.5,328.0V309.3M264.5,320.2V293.5M265.5,317.1V293.7M269.5,321.2V311.1M271.5,318.6V310.1M272.5,315.3V303.4M274.5,316.3V308.1M277.5,327.5V320.7M278.5,321.1V311.5M280.5,315.2V307.8M281.5,337.4V332.0M282.5,321.8V314.9M285.5,324.1V308.7M286.5,323.6V308.4M287.5,319.2V312.8M289.5,326.7V319.6M290.5,323.8V318.1M291.5,317.5V309.8M292.5,330.6V318.9M293.5,318.4V302.0M294.5,322.9V317.8M296.5,317.4V294.8M298.5,317.7V308.2M299.5,324.8V316.5M300.5,311.8V304.8M304.5,321.4V309.6M305.5,336.4V331.2M307.5,316.7V300.7M308.5,317.2V306.5M310.5,322.2V311.7M312.5,322.7V296.5M313.5,317.8V308.2M314.5,338.5V329.8M319.5,316.3V307.0M320.5,317.1V310.2M321.5,318.2V291.0M322.5,322.3V304.5M323.5,327.6V318.1M324.5,317.5V304.4M325.5,322.2V315.3M326.5,319.2V308.0M327.5,320.9V310.0M329.5,341.5V334.4M330.5,318.1V307.5M331.5,321.6V312.5M332.5,315.8V308.0M333.5,315.8V309.4M334.5,314.8V291.0M335.5,312.0V303.3M336.5,321.7V312.6M337.5,315.0V307.1M339.5,316.8V309.3M342.5,315.9V297.4M343.5,326.8V309.3M344.5,314.6V291.0M345.5,328.9V316.7M346.5,317.6V297.7M347.5,322.4V314.7M348.5,316.5V301.4M349.5,317.5V304.7M355.5,304.9V299.0M356.5,302.9V298.4M357.5,299.5V297.4M358.5,297.8V294.9M359.5,298.8V293.6M360.5,298.0V293.3M361.5,296.1V292.2M362.5,292.8V289.8M363.5,292.0V288.9M415.5,306.6V294.5M416.5,307.5V297.3M417.5,308.0V297.4M418.5,307.0V297.6M419.5,309.9V298.0M420.5,310.7V299.7M421.5,308.7V301.5M422.5,313.6V298.8M423.5,313.6V305.0M424.5,311.3V304.8M425.5,313.2V307.4M426.5,316.3V308.5M427.5,314.5V308.0M428.5,317.6V309.9M429.5,316.8V309.2M430.5,318.4V297.3M431.5,318.6V306.8M433.5,316.0V298.8M434.5,318.2V301.5M435.5,312.1V295.0M440.5,323.0V317.8M442.5,312.7V305.8M443.5,317.8V309.8M444.5,319.6V295.0M445.5,315.5V302.9M446.5,321.0V315.3M447.5,325.0V317.2M448.5,319.4V312.5M450.5,327.7V309.4M451.5,318.1V295.0M452.5,328.2V314.8M453.5,327.1V302.6M454.5,327.7V320.6M455.5,318.3V308.6M457.5,336.0V327.5M458.5,318.9V306.8M460.5,319.7V303.1M461.5,320.6V314.5M462.5,322.7V302.1M463.5,316.8V295.8M464.5,321.5V301.3M465.5,314.2V301.4M467.5,317.9V306.1M468.5,318.5V297.6M470.5,323.3V314.9M471.5,323.4V311.7M473.5,317.6V309.6M476.5,315.8V309.3M478.5,322.4V313.8M479.5,323.3V316.9M480.5,323.2V315.2M481.5,314.7V295.0M483.5,318.6V296.7M484.5,324.5V319.1M489.5,333.2V326.2M491.5,323.9V315.0M493.5,329.8V320.1M495.5,324.7V304.8M496.5,316.8V311.7M500.5,320.6V311.4M502.5,320.9V297.4M506.5,316.1V307.2M507.5,320.6V315.5M508.5,321.5V315.5M509.5,314.0V295.0M511.5,318.1V306.9M512.5,320.8V302.0M514.5,319.4V310.0M515.5,318.1V309.9M516.5,329.5V322.2M519.5,322.1V313.6M520.5,321.9V299.2M521.5,318.9V311.1M524.5,329.6V322.0M530.5,324.5V314.8M531.5,328.2V315.4M532.5,318.1V300.9M534.5,327.2V317.8M535.5,328.2V314.3M536.5,322.7V313.5M537.5,323.5V302.3M539.5,316.6V309.7M540.5,320.7V306.9M546.5,317.6V295.0M547.5,322.6V316.0M549.5,319.3V314.0M550.5,328.0V320.7M551.5,318.1V310.4M552.5,317.9V308.7M553.5,321.6V316.4M555.5,314.8V308.0M558.5,326.0V311.3M559.5,327.2V320.7M561.5,317.3V300.1M563.5,319.2V311.1M564.5,321.6V309.0M565.5,318.3V311.3M566.5,325.7V296.7M571.5,327.1V310.7M572.5,329.7V315.0M573.5,316.4V305.8M575.5,318.6V295.0M578.5,329.3V322.8M579.5,317.2V300.0M580.5,328.0V305.0M582.5,321.3V310.8M583.5,319.7V295.0M584.5,319.8V310.8M585.5,317.4V310.5M591.5,318.6V308.2M592.5,321.8V314.8M593.5,323.3V304.7M595.5,318.2V308.9M596.5,323.7V305.1M598.5,340.0V334.3M600.5,321.3V313.8M602.5,328.5V322.9M603.5,320.2V302.0M604.5,322.6V304.4M605.5,318.7V307.9M606.5,333.4V328.0M608.5,323.3V309.3M610.5,319.3V310.2M613.5,319.2V295.0M614.5,314.2V308.3M615.5,333.8V323.5M619.5,323.6V314.8M622.5,315.4V309.0M623.5,315.7V309.0M624.5,323.9V309.4M625.5,322.8V317.6M627.5,322.8V305.9M628.5,316.6V295.6M629.5,327.8V316.9M630.5,321.7V304.3M633.5,321.3V314.4M634.5,321.8V316.0M636.5,314.8V309.1M638.5,323.9V308.3M639.5,328.9V320.8M641.5,317.7V295.0M642.5,321.6V295.0M643.5,323.6V309.9M646.5,319.8V309.1M647.5,322.7V312.0M649.5,326.4V316.9" stroke="#c4c428" stroke-width="1" fill="none"/>
<path d="M147.5,280V489.2M224.5,280V489.2M252.5,280V489.2M275.5,280V489.2M286.5,280V489.2M294.5,280V489.2M308.5,280V489.2M325.5,280V489.2M362.5,280V489.2M423.5,280V489.2M512.5,280V489.2M540.5,280V489.2M574.5,280V489.2M629.5,280V489.2M631.5,280V489.2M646.5,280V489.2" stroke="#000" stroke-width="1.4" fill="none"/>
<path d="M471.5,290V347M489.5,290V357M576.5,290V378M352.5,290V339.7M225.5,290V360M256.5,290V330" stroke="#000" stroke-width="1" fill="none" shape-rendering="crispEdges"/>
<text transform="translate(133.94,213.80) scale(0.1073,0.0716)" font-family="Liberation Mono" font-weight="normal" font-size="100" fill="#f4f4fa"  stroke="#000" stroke-width="1.8" xml:space="preserve">REF</text>
<path d="M394.6,211V489.2M399.4,211V489.2M403.2,211V489.2" stroke="#8c2030" stroke-width="1.1" stroke-dasharray="3.5,3" fill="none"/>
<path d="M365,300 L367,285.2 L369.2,276.1 L370.9,271.5 L372.5,269.5 L374.2,267 L375.5,263 L376.8,250 L377.4,243 L378.2,235.1 L380.7,228 L383.3,226.6 L386,229.8 L388.7,232.5 L391.3,229.8 L394,227.1 L395.7,219.2 L398.4,213 L400.7,210.8 L402.8,213 L405.5,224.5 L407.2,236.9 L408.5,249 L411.8,263 L412.4,273 L413,281.4 L413.2,300" stroke="#e8e870" stroke-width="1" fill="none"/>
<path d="M365,300L367,285.2L369.2,276.1L370.9,271.5L372.5,269.5L374.2,267L375.5,263" stroke="#ffff20" stroke-width="2" fill="none"/>
<path d="M364.5,298V489.2M413.2,300L414.6,489.2" stroke="#f8f820" stroke-width="1" fill="none"/>
</svg></body></html>
